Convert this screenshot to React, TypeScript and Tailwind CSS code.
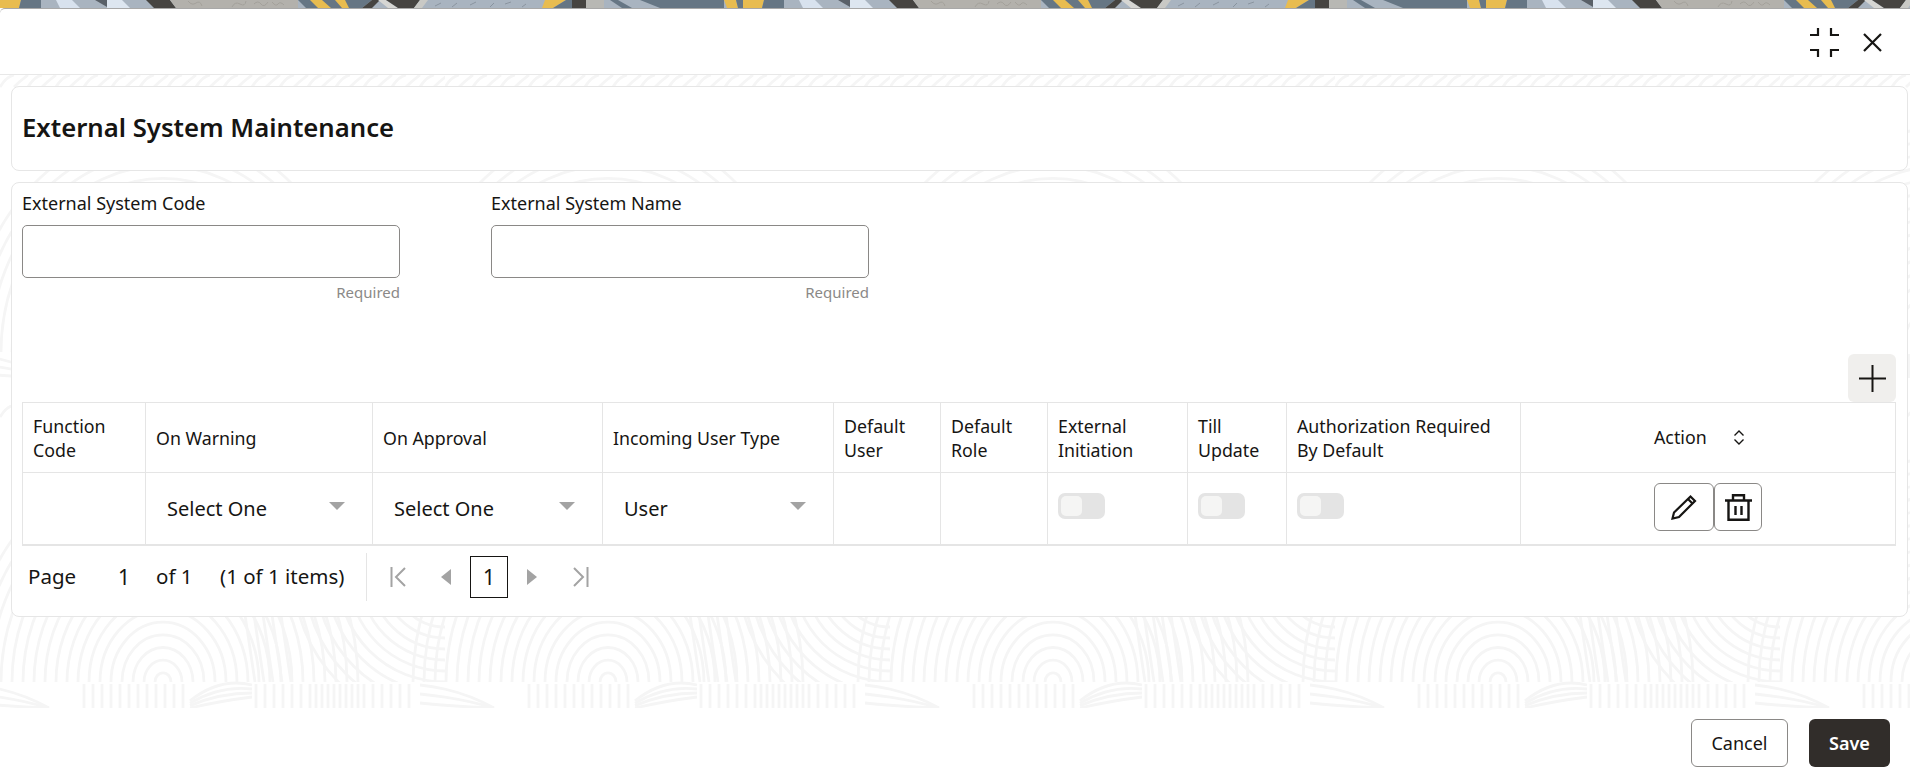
import React from 'react';

const font = "font-['Noto_Sans','Liberation_Sans',sans-serif]";

const columns = [
  { label: ['Function', 'Code'], width: 'w-[123px]' },
  { label: ['On Warning'], width: 'w-[227px]' },
  { label: ['On Approval'], width: 'w-[230px]' },
  { label: ['Incoming User Type'], width: 'w-[231px]' },
  { label: ['Default', 'User'], width: 'w-[107px]' },
  { label: ['Default', 'Role'], width: 'w-[107px]' },
  { label: ['External', 'Initiation'], width: 'w-[140px]' },
  { label: ['Till', 'Update'], width: 'w-[99px]' },
  { label: ['Authorization Required', 'By Default'], width: 'w-[234px]' },
];

const radii = Array.from({ length: 18 }, (_, i) => 8 + i * 11);
const sweep = Array.from({ length: 12 }, (_, i) => 30 + i * 11);
const uprights = [84, 93, 102, 111, 120, 129, 138, 147, 156, 165, 174, 183, 256, 265, 274, 283, 292, 301, 310, 316, 322, 328, 334, 340, 346, 352, 358, 364, 373, 382, 391, 400, 409];
const flecks = Array.from({ length: 32 }, (_, i) => i * 14);

// faint fingerprint texture behind the cards
function Texture() {
  return (
    <svg className="absolute inset-0 w-full h-full" aria-hidden="true">
      <defs>
        <clipPath id="upper">
          <rect width="445" height="277" />
        </clipPath>
        <pattern id="prints" width="445" height="330" patternUnits="userSpaceOnUse">
          <g fill="none" stroke="#f5f5f5" strokeWidth="2.8">
            <g clipPath="url(#upper)">
              {radii.map((r) => (
                <path key={r} d={`M${163 - r} 277 A${r} ${r * 1.15} 0 0 1 ${163 + r} 277`} />
              ))}
              {radii.map((r) => (
                <path key={r} d={`M${608 - r} 277 A${r} ${r * 1.15} 0 0 1 ${608 + r} 277`} />
              ))}
              {sweep.map((r) => (
                <path key={r} d={`M${445 - r} 170 A${r} ${r} 0 0 0 445 ${170 + r}`} />
              ))}
              {[0, 9, 18, 27, 36].map((d) => (
                <path key={d} d={`M${245 + d} 210 L${255 + d} 277`} />
              ))}
            </g>
            {uprights.map((x) => (
              <path key={x} d={`M${x} 279 L${x} 303`} />
            ))}
            {[0, 8, 16, 24].map((d) => (
              <path key={d} d={`M190 ${303 - d * 0.3} Q220 ${296 - d} 252 ${292 - d * 0.5}`} />
            ))}
            {[0, 9, 18].map((d) => (
              <g key={d}>
                <path d={`M420 ${280 + d} Q460 ${284 + d} 494 303`} />
                <path d={`M-25 ${280 + d} Q15 ${284 + d} 49 303`} />
              </g>
            ))}
            {flecks.map((x) => (
              <path key={x} d={`M${x} 12 Q${x + 6} ${x % 28 === 0 ? 2 : 6} ${x + 14} 0`} />
            ))}
          </g>
        </pattern>
      </defs>
      <rect width="100%" height="100%" fill="url(#prints)" />
    </svg>
  );
}

function Banner() {
  return (
    <svg className="block w-full h-2 shrink-0" aria-hidden="true">
      <defs>
        <pattern id="strip" width="743" height="8" patternUnits="userSpaceOnUse">
          <rect width="743" height="8" fill="#a9b4c0" />
          <polygon points="0,0 21,0 19,8 0,8" fill="#e8bc50" />
          <polygon points="21,0 41,0 41,8 19,8" fill="#667684" />
          <polygon points="56,0 72,0 80,8 60,8" fill="#d8e2ee" />
          <polygon points="95,0 107,0 107,7" fill="#596068" />
          <polygon points="107,0 122,0 130,8 107,8" fill="#dde6f0" />
          <polygon points="146,0 170,0 176,8 154,8" fill="#464441" />
          <polygon points="170,0 298,0 298,8 176,8" fill="#b3b1ac" />
          <g fill="none" stroke="#9e9c96" strokeWidth="0.8">
            <path d="M188 1 q4 5 8 2 t6 3 M232 7 q3 -6 8 -3 t6 -3 M254 4 q4 -4 7 0 t7 -2 M272 2 q4 5 6 2 t6 1" />
          </g>
          <polygon points="298,0 372,0 362,8 306,8" fill="#667684" />
          <polygon points="310,0 322,0 331,8 318,8" fill="#e8bc50" />
          <polygon points="335,0 345,0 349,8 342,8" fill="#e8bc50" />
          <polygon points="372,0 380,0 372,8 362,8" fill="#464441" />
          <polygon points="378,0 386,0 398,8 388,8" fill="#d6d6d3" />
          <polygon points="386,0 420,0 414,8 398,8" fill="#464441" />
          <polygon points="420,0 428,0 422,8 414,8" fill="#c9c9c5" />
          <g fill="none" stroke="#828c97" strokeWidth="0.8">
            <path d="M435 6 l6 -3 M452 7 l5 -4 M470 5 l6 -3 M490 7 l4 -4 M505 4 l6 -2 M522 7 l4 -3" />
          </g>
          <polygon points="545,0 566,0 553,8 542,8" fill="#e8bc50" />
          <polygon points="566,0 572,0 572,8 553,8" fill="#667684" />
          <rect x="572" width="14" height="8" fill="#464441" />
          <rect x="586" width="18" height="8" fill="#b8b8b4" />
          <polygon points="618,0 632,8 622,8 610,0" fill="#667684" />
          <polygon points="640,0 724,0 724,8 660,8" fill="#667684" />
          <polygon points="724,0 736,0 738,8 727,8" fill="#e8bc50" />
          <polygon points="736,0 743,0 743,8 738,8" fill="#667684" />
        </pattern>
      </defs>
      <rect width="100%" height="8" fill="url(#strip)" />
    </svg>
  );
}

function Arrow() {
  return (
    <svg width="16" height="8" viewBox="0 0 16 8" className="shrink-0">
      <path d="M0 0h16l-8 8z" fill="#a3a3a3" />
    </svg>
  );
}

function SelectBox({ value }: { value: string }) {
  return (
    <div className="flex items-center justify-between pl-[21px] pr-[27px] h-full">
      <span className="text-[20px] text-[#161513] mt-[2px]">{value}</span>
      <span className="-mt-[4px]"><Arrow /></span>
    </div>
  );
}

function Toggle() {
  return (
    <div className="w-[47px] h-[26px] rounded-[7px] bg-[#e4e4e4] p-[3px] -mt-[4px]">
      <div className="w-[21px] h-[20px] rounded-[5px] bg-[#f5f5f4]" />
    </div>
  );
}

function Field({ label }: { label: string }) {
  return (
    <div className="w-[378px]">
      <div className="h-[24px] leading-[24px] text-[18px] text-[#161513]">{label}</div>
      <input className="block mt-[10px] w-full h-[53px] border border-[#8a8886] rounded-[5px] bg-white" />
      <div className="mt-[4px] h-[20px] leading-[20px] text-right text-[15px] text-[#8b8987]">Required</div>
    </div>
  );
}

export default function App() {
  return (
    <div className={`w-[1910px] h-[776px] flex flex-col overflow-hidden bg-white text-[#161513] ${font}`}>
      <Banner />

      <div className="flex flex-col flex-1 bg-white rounded-tl-[5px] border-t border-[#a8a8a8] min-h-0">
        {/* Modal header */}
        <div className="h-[66px] shrink-0 flex items-center justify-end pr-[28px] gap-[24px] border-b border-[#e8e8e8]">
          <svg width="29" height="29" viewBox="0 0 29 29" fill="none" stroke="#161513" strokeWidth="2.2" className="mt-[1px]">
            <path d="M0 7h8V0M21 0v7h8M0 22h8v7M29 22h-8v7" />
          </svg>
          <svg width="19" height="19" viewBox="0 0 19 19" fill="none" stroke="#161513" strokeWidth="2.2" className="mt-[1px]">
            <path d="M1 1l17 17M18 1L1 18" />
          </svg>
        </div>

        {/* Page body */}
        <div className="relative h-[633px] shrink-0 pt-[11px] pl-[11px] pr-[2px]">
          <Texture />
          <div className="relative h-[85px] flex items-center pl-[10px] bg-white border border-[#e6e6e6] rounded-[8px]">
            <h1 className="text-[25.7px] font-semibold">External System Maintenance</h1>
          </div>

          <div className="relative mt-[11px] h-[435px] pt-[8px] pl-[10px] pr-[11px] bg-white border border-[#e6e6e6] rounded-[8px]">
            <div className="flex gap-[91px]">
              <Field label="External System Code" />
              <Field label="External System Name" />
            </div>

            <div className="flex justify-end mt-[52px]">
              <button className="w-[48px] h-[48px] rounded-[6px] bg-[#f0efed] flex items-center justify-center">
                <svg width="27" height="27" viewBox="0 0 27 27" fill="none" stroke="#161513" strokeWidth="2">
                  <path d="M13.5 0v27M0 13.5h27" />
                </svg>
              </button>
            </div>

            <table className="w-[1874px] table-fixed border-collapse text-[17.8px]">
              <thead>
                <tr className="h-[70px]">
                  {columns.map((c) => (
                    <th key={c.label[0] + c.label.length} className={`${c.width} border border-[#e5e5e5] pl-[10px] text-left font-normal leading-[24px]`}>
                      {c.label.map((l) => (
                        <div key={l}>{l}</div>
                      ))}
                    </th>
                  ))}
                  <th className="border border-[#e5e5e5] font-normal">
                    <div className="flex items-center gap-[26px] pl-[133px]">
                      <span>Action</span>
                      <svg width="12" height="15" viewBox="0 0 12 15" fill="none" stroke="#161513" strokeWidth="1.4">
                        <path d="M1.5 5.5L6 1l4.500 4.500M1.500 9.500L6 14l4.500-4.500" />
                      </svg>
                    </div>
                  </th>
                </tr>
              </thead>
              <tbody>
                <tr className="h-[72px] border-b-2 border-[#e5e5e5]">
                  <td className="border border-[#e5e5e5] border-b-2" />
                  <td className="border border-[#e5e5e5] border-b-2 p-0"><SelectBox value="Select One" /></td>
                  <td className="border border-[#e5e5e5] border-b-2 p-0"><SelectBox value="Select One" /></td>
                  <td className="border border-[#e5e5e5] border-b-2 p-0"><SelectBox value="User" /></td>
                  <td className="border border-[#e5e5e5] border-b-2" />
                  <td className="border border-[#e5e5e5] border-b-2" />
                  <td className="border border-[#e5e5e5] border-b-2 pl-[10px]"><Toggle /></td>
                  <td className="border border-[#e5e5e5] border-b-2 pl-[10px]"><Toggle /></td>
                  <td className="border border-[#e5e5e5] border-b-2 pl-[10px]"><Toggle /></td>
                  <td className="border border-[#e5e5e5] border-b-2">
                    <div className="flex pl-[133px] -mt-[2px]">
                      <button className="w-[60px] h-[48px] border border-[#8a8886] rounded-[6px] flex items-center justify-center">
                        <svg width="26" height="26" viewBox="0 0 26 26" fill="none" stroke="#161513" strokeWidth="2.200">
                          <path d="M1.500 24.500l1.500-6L19.500 2.500l4.500 4.500L8 23z" />
                          <path d="M17 5l4.500 4.500" />
                        </svg>
                      </button>
                      <button className="w-[48px] h-[48px] border border-[#8a8886] rounded-[6px] flex items-center justify-center">
                        <svg width="27" height="27" viewBox="0 0 27 27" fill="none" stroke="#161513" strokeWidth="2.400">
                          <path d="M0 6.500h27M8 6.500V1.200h11v5.300M3.500 6.500v19.300h20V6.500M10.500 12v9M16.500 12v9" />
                        </svg>
                      </button>
                    </div>
                  </td>
                </tr>
              </tbody>
            </table>

            {/* Pagination */}
            <div className="flex items-center h-[48px] mt-[7px] pl-[6px] text-[20.5px]">
              <span className="w-[90px]">Page</span>
              <span className="w-[38px] text-[21px] mt-[2px]">1</span>
              <span className="w-[64px]">of 1</span>
              <span className="w-[146px] whitespace-nowrap">(1 of 1 items)</span>
              <div className="w-px h-[48px] bg-[#e5e5e5]" />
              <svg width="17" height="20" viewBox="0 0 17 20" fill="none" stroke="#a3a3a3" strokeWidth="2" className="ml-[23px]">
                <path d="M1.500 0v20M15 1L6 10l9 9" />
              </svg>
              <svg width="10" height="16" viewBox="0 0 10 16" className="ml-[34px]">
                <path d="M10 0v16L0 8z" fill="#a3a3a3" />
              </svg>
              <div className="ml-[19px] w-[38px] h-[42px] border border-[#161513] flex items-center justify-center text-[21px] pt-[2px]">1</div>
              <svg width="10" height="16" viewBox="0 0 10 16" className="ml-[19px]">
                <path d="M0 0v16l10-8z" fill="#a3a3a3" />
              </svg>
              <svg width="17" height="20" viewBox="0 0 17 20" fill="none" stroke="#a3a3a3" strokeWidth="2" className="ml-[35px]">
                <path d="M15.500 0v20M2 1l9 9-9 9" />
              </svg>
            </div>
          </div>
        </div>

        {/* Modal footer */}
        <div className="flex-1 flex items-center justify-end pr-[20px] gap-[21px] pt-[2px]">
          <button className="w-[97px] h-[48px] border border-[#8a8886] rounded-[6px] text-[18px]">Cancel</button>
          <button className="w-[81px] h-[48px] rounded-[6px] bg-[#312d2a] text-white text-[18px] font-semibold">Save</button>
        </div>
      </div>
    </div>
  );
}
